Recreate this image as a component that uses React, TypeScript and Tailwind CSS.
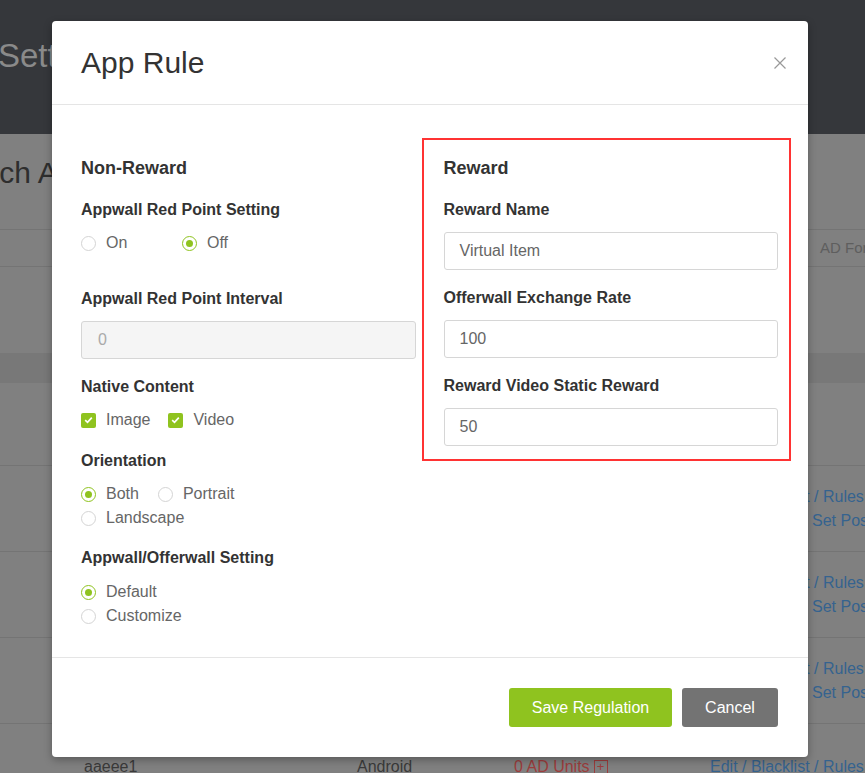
import React from "react";

const font = { fontFamily: '"Liberation Sans", Arial, sans-serif' };

function Radio({ checked, label }: { checked?: boolean; label: string }) {
  return (
    <div className="flex items-center h-[24px]">
      <span
        className={
          checked
            ? "w-[15px] h-[15px] rounded-full border border-[#8fc31f] flex items-center justify-center"
            : "w-[15px] h-[15px] rounded-full border border-[#d4d4d4]"
        }
      >
        {checked && <span className="w-[7px] h-[7px] rounded-full bg-[#8fc31f]" />}
      </span>
      <span className="ml-[10px] text-[16px] text-[#666]">{label}</span>
    </div>
  );
}

function Check({ label }: { label: string }) {
  return (
    <div className="flex items-center h-[24px]">
      <span className="w-[15px] h-[15px] rounded-[2px] bg-[#8fc31f] flex items-center justify-center">
        <svg width="9" height="8" viewBox="0 0 9 8">
          <path d="M1.2 4.2 L3.5 6.3 L7.8 1.6" fill="none" stroke="#fff" strokeWidth="1.7" />
        </svg>
      </span>
      <span className="ml-[10px] text-[16px] text-[#666]">{label}</span>
    </div>
  );
}

function Label({ children, className = "" }: { children: React.ReactNode; className?: string }) {
  return <div className={"text-[16px] leading-[22px] font-bold text-[#333] " + className}>{children}</div>;
}

function Input({ value, disabled }: { value: string; disabled?: boolean }) {
  return (
    <div
      className={
        disabled
          ? "h-[38px] rounded-[3px] border border-[#d6d6d6] bg-[#f5f5f5] px-[16px] flex items-center text-[16px] text-[#aaa]"
          : "h-[38px] rounded-[3px] border border-[#d6d6d6] bg-white px-[15px] flex items-center text-[16px] text-[#666]"
      }
    >
      {value}
    </div>
  );
}

function BgRow({ two }: { two?: boolean }) {
  return (
    <div className="h-[86px] border-t border-[#747474] flex items-center">
      <div className="ml-[710px] text-[16px] text-[#35638f] leading-[24px] whitespace-nowrap">
        <div>Edit / Blacklist / Rules</div>
        {two && <div className="pl-[102px]">Set Position</div>}
      </div>
    </div>
  );
}

export default function App() {
  return (
    <div className="relative w-[865px] h-[773px] overflow-hidden bg-[#808080]" style={font}>
      {/* background page */}
      <div className="h-[134px] bg-[#35373b] flex items-center">
        <div className="-ml-[2px] -mt-[22px] text-[33px] text-[#8a8a8a] whitespace-nowrap">Settings</div>
      </div>
      <div className="h-[95px] flex items-center">
        <div className="-ml-[64px] -mt-[18px] text-[30px] text-[#2e2e2e] whitespace-nowrap">Search Apps</div>
      </div>
      <div className="h-[38px] border-t border-b border-[#747474] flex items-center">
        <div className="ml-[820px] text-[15px] text-[#5e5e5e] whitespace-nowrap">AD Format</div>
      </div>
      <div className="h-[86px]" />
      <div className="h-[30px] bg-[#787878]" />
      <div className="h-[82px]" />
      <BgRow two />
      <BgRow two />
      <BgRow two />
      <div className="h-[86px] border-t border-[#747474] flex items-center text-[16px] whitespace-nowrap">
        <div className="ml-[84px] w-[273px] text-[#3a3a3a]">aaeee1</div>
        <div className="w-[157px] text-[#3a3a3a]">Android</div>
        <div className="w-[196px] text-[#9c3c3c] flex items-center">
          0 AD Units
          <span className="ml-[4px] w-[14px] h-[14px] border border-[#9c3c3c] flex items-center justify-center text-[13px] leading-none">+</span>
        </div>
        <div className="text-[#35638f]">Edit / Blacklist / Rules</div>
      </div>

      {/* modal */}
      <div className="absolute left-[52px] top-[21px] w-[756px] h-[736px] bg-white rounded-[4px] shadow-[0_3px_9px_rgba(0,0,0,0.3)] flex flex-col">
        <div className="h-[84px] flex items-center justify-between pl-[29px] pr-[22px] border-b border-[#e5e5e5] shrink-0">
          <div className="text-[30px] text-[#333] leading-none">App Rule</div>
          <svg width="12" height="12" viewBox="0 0 12 12">
            <path d="M0.5 0.5 L11.5 11.5 M11.5 0.5 L0.5 11.5" stroke="#999" strokeWidth="1.2" />
          </svg>
        </div>

        <div className="flex-1 flex gap-[28px] pl-[29px] pr-[30px] pt-[51px]">
          <div className="flex-1">
            <div className="text-[18px] leading-[24px] font-bold text-[#333]">Non-Reward</div>
            <Label className="mt-[19px]">Appwall Red Point Setting</Label>
            <div className="mt-[10px] flex">
              <div className="w-[101px]">
                <Radio label="On" />
              </div>
              <Radio checked label="Off" />
            </div>
            <Label className="mt-[33px]">Appwall Red Point Interval</Label>
            <div className="mt-[11px]">
              <Input value="0" disabled />
            </div>
            <Label className="mt-[17px]">Native Content</Label>
            <div className="mt-[10px] flex gap-[18px]">
              <Check label="Image" />
              <Check label="Video" />
            </div>
            <Label className="mt-[18px]">Orientation</Label>
            <div className="mt-[10px] flex gap-[19px]">
              <Radio checked label="Both" />
              <Radio label="Portrait" />
            </div>
            <Radio label="Landscape" />
            <Label className="mt-[17px]">Appwall/Offerwall Setting</Label>
            <div className="mt-[11px]">
              <Radio checked label="Default" />
              <Radio label="Customize" />
            </div>
          </div>
          <div className="flex-1">
            <div className="text-[18px] leading-[24px] font-bold text-[#333]">Reward</div>
            <Label className="mt-[19px]">Reward Name</Label>
            <div className="mt-[11px]">
              <Input value="Virtual Item" />
            </div>
            <Label className="mt-[17px]">Offerwall Exchange Rate</Label>
            <div className="mt-[11px]">
              <Input value="100" />
            </div>
            <Label className="mt-[17px]">Reward Video Static Reward</Label>
            <div className="mt-[11px]">
              <Input value="50" />
            </div>
          </div>
        </div>

        <div className="h-[100px] shrink-0 border-t border-[#e5e5e5] flex items-start justify-end gap-[10px] pt-[30px] pr-[30px]">
          <button className="w-[163px] h-[39px] rounded-[3px] bg-[#8fc31f] text-white text-[16px]">Save Regulation</button>
          <button className="w-[96px] h-[39px] rounded-[3px] bg-[#737373] text-white text-[16px]">Cancel</button>
        </div>

        <div className="absolute left-[370px] top-[117px] w-[369px] h-[323px] border-2 border-[#ff3333] pointer-events-none" />
      </div>
    </div>
  );
}
